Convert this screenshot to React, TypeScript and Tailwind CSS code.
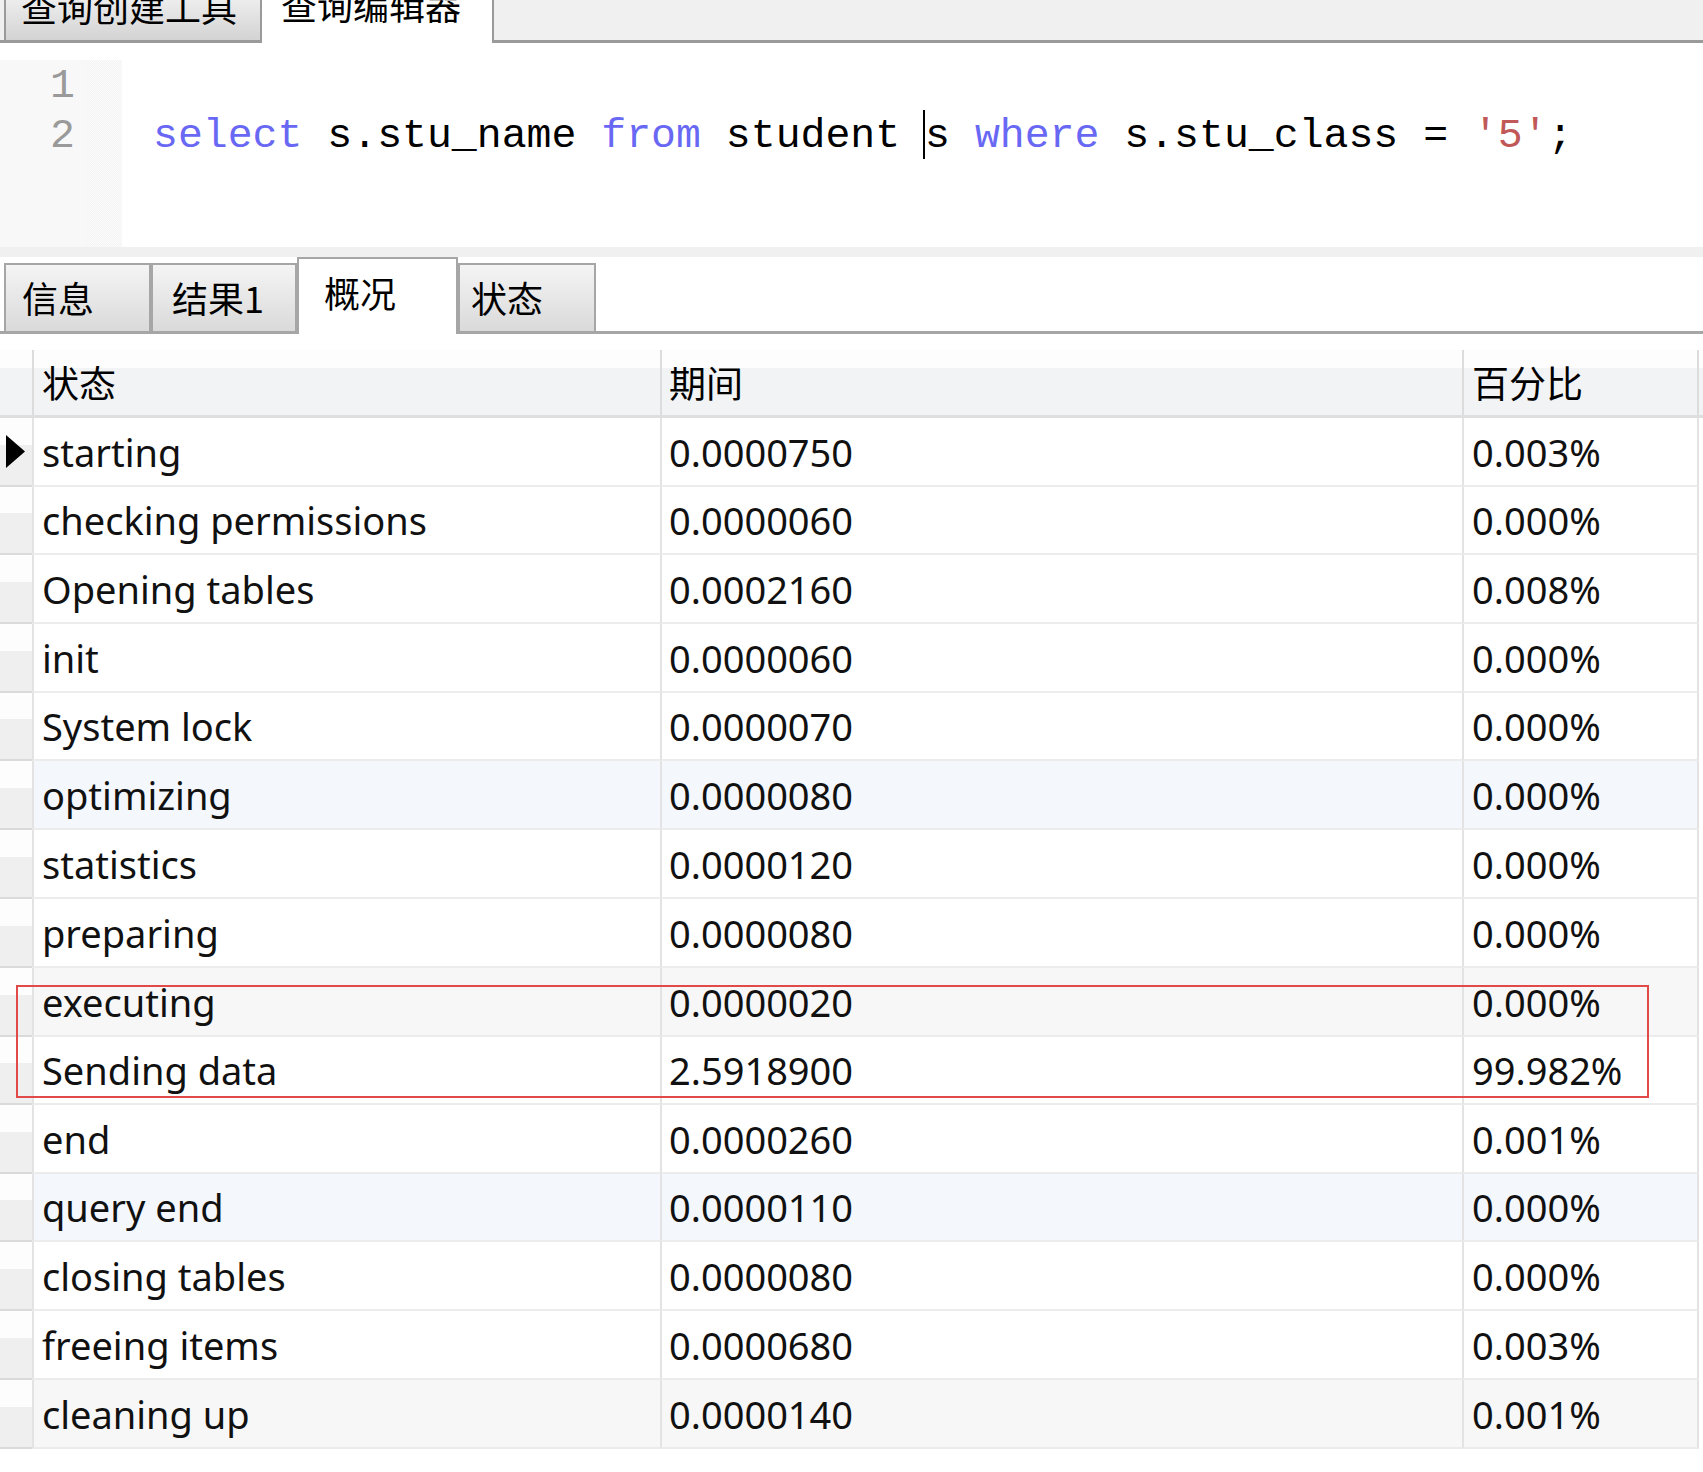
import React from "react";

type Row = { name: string; dur: string; pct: string; h: string; bg: string };

const rows: Row[] = [
  { name: "starting", dur: "0.0000750", pct: "0.003%", h: "h-[69px]", bg: "bg-white" },
  { name: "checking permissions", dur: "0.0000060", pct: "0.000%", h: "h-[68px]", bg: "bg-white" },
  { name: "Opening tables", dur: "0.0002160", pct: "0.008%", h: "h-[69px]", bg: "bg-white" },
  { name: "init", dur: "0.0000060", pct: "0.000%", h: "h-[69px]", bg: "bg-white" },
  { name: "System lock", dur: "0.0000070", pct: "0.000%", h: "h-[68px]", bg: "bg-white" },
  { name: "optimizing", dur: "0.0000080", pct: "0.000%", h: "h-[69px]", bg: "bg-[#f4f7fc]" },
  { name: "statistics", dur: "0.0000120", pct: "0.000%", h: "h-[69px]", bg: "bg-white" },
  { name: "preparing", dur: "0.0000080", pct: "0.000%", h: "h-[69px]", bg: "bg-white" },
  { name: "executing", dur: "0.0000020", pct: "0.000%", h: "h-[69px]", bg: "bg-[#f7f7f7]" },
  { name: "Sending data", dur: "2.5918900", pct: "99.982%", h: "h-[68px]", bg: "bg-white" },
  { name: "end", dur: "0.0000260", pct: "0.001%", h: "h-[69px]", bg: "bg-white" },
  { name: "query end", dur: "0.0000110", pct: "0.000%", h: "h-[68px]", bg: "bg-[#f4f7fc]" },
  { name: "closing tables", dur: "0.0000080", pct: "0.000%", h: "h-[69px]", bg: "bg-white" },
  { name: "freeing items", dur: "0.0000680", pct: "0.003%", h: "h-[69px]", bg: "bg-white" },
  { name: "cleaning up", dur: "0.0000140", pct: "0.001%", h: "h-[69px]", bg: "bg-[#f7f7f7]" },
];

const cjk = "font-['Noto_Sans_CJK_SC',sans-serif]";
const mono = "font-['Liberation_Mono',monospace]";
const sans = "font-['Noto_Sans','Noto_Sans_CJK_SC',sans-serif]";

export default function App() {
  return (
    <div className="w-[1703px] h-[1472px] bg-white overflow-hidden text-black">
      {/* top tab strip */}
      <div className={`flex h-[43px] bg-[#f0f0f0] overflow-hidden ${cjk} text-[36px] leading-[36px]`}>
        <div className="w-[4px] border-b-[3px] border-[#9a9a9a]" />
        <div className="w-[258px] flex items-end pl-[15px] pb-[16px] border-l-2 border-r-2 border-b-[3px] border-[#9a9a9a] bg-[linear-gradient(to_bottom,#ededed,#d3d3d3)] whitespace-nowrap">
          查询创建工具
        </div>
        <div className="w-[232px] flex items-end pl-[19px] pb-[21px] border-r-2 border-[#9a9a9a] bg-white whitespace-nowrap">
          查询编辑器
        </div>
        <div className="flex-1 border-b-[3px] border-[#9a9a9a]" />
      </div>

      {/* editor */}
      <div className="h-[17px] bg-white" />
      <div className={`flex h-[187px] ${mono} text-[41.5px] leading-[50px]`}>
        <div className="w-[84px] bg-[#f8f8f8] pt-[1px] pr-[9px] text-right text-[#9a9a9a]">
          <div>1</div>
          <div>2</div>
        </div>
        <div className="w-[38px] bg-[repeating-conic-gradient(#f3f3f3_0_25%,#fcfcfc_0_50%)] bg-[length:2px_2px]" />
        <div className="flex-1 pl-[31px] pt-[1px] whitespace-pre">
          <div>&nbsp;</div>
          <div>
            <span className="text-[#6868f4]">select</span>
            <span> s.stu_name </span>
            <span className="text-[#6868f4]">from</span>
            <span> student </span>
            <span className="relative inline-block w-0">
              <span className="absolute left-[-2px] top-[-37px] h-[49px] w-[2px] bg-black" />
            </span>
            <span>s </span>
            <span className="text-[#6868f4]">where</span>
            <span> s.stu_class = </span>
            <span className="text-[#c05858]">'5'</span>
            <span>;</span>
          </div>
        </div>
      </div>
      <div className="h-[10px] bg-[#f0f0f0]" />

      {/* result tabs */}
      <div className={`flex h-[77px] items-end ${cjk} text-[36px] leading-[36px]`}>
        <div className="w-[4px] self-stretch border-b-[3px] border-[#a6a6a6]" />
        <div className="w-[147px] h-[71px] flex items-center pl-[16px] pb-[3px] border-2 border-b-[3px] border-[#a6a6a6] bg-[linear-gradient(to_bottom,#f4f4f4,#dadada)]">
          信息
        </div>
        <div className="w-[146px] h-[71px] flex items-center pl-[19px] pb-[3px] border-2 border-b-[3px] border-[#a6a6a6] bg-[linear-gradient(to_bottom,#f4f4f4,#dadada)]">
          结果1
        </div>
        <div className="w-[161px] h-[77px] flex items-center pl-[25px] pb-[10px] border-2 border-b-0 border-[#a6a6a6] bg-white">
          概况
        </div>
        <div className="w-[138px] h-[71px] flex items-center pl-[11px] pb-[3px] border-2 border-b-[3px] border-[#a6a6a6] bg-[linear-gradient(to_bottom,#f4f4f4,#dadada)]">
          状态
        </div>
        <div className="flex-1 self-stretch border-b-[3px] border-[#a6a6a6]" />
      </div>

      {/* table */}
      <div className="h-[16px]" />
      <div className="relative">
        {/* header */}
        <div className={`grid grid-cols-[32px_628px_802px_237px] h-[68px] border-b-[3px] border-[#dedede] bg-[linear-gradient(to_bottom,#fdfdfd_28%,#f2f3f5_28%)] ${cjk} text-[37px]`}>
          <div />
          <div className="flex items-center pl-[8px] border-l-2 border-[#dcdcdc]">状态</div>
          <div className="flex items-center pl-[7px] border-l-2 border-[#dcdcdc]">期间</div>
          <div className="flex items-center pl-[8px] border-l-2 border-r-2 border-[#dcdcdc]">百分比</div>
        </div>
        {rows.map((r, i) => (
          <div
            key={r.name}
            className={`grid grid-cols-[32px_628px_802px_237px] ${r.h} ${sans} text-[38px] leading-[52px] text-[#111]`}
          >
            <div className="relative border-b-2 border-[#dadada] bg-[linear-gradient(to_bottom,#fdfdfd_40%,#efefef_40%)]">
              {i === 0 && (
                <svg className="absolute left-[6px] top-[17px]" width="20" height="33" viewBox="0 0 20 33">
                  <polygon points="0,0 19,16.5 0,33" fill="#000" />
                </svg>
              )}
            </div>
            <div className={`flex items-center pl-[8px] border-l-2 border-b-2 border-l-[#e3e3e3] border-b-[#ececec] ${r.bg} whitespace-nowrap`}>
              {r.name}
            </div>
            <div className={`flex items-center pl-[7px] border-l-2 border-b-2 border-l-[#e3e3e3] border-b-[#ececec] ${r.bg}`}>
              {r.dur}
            </div>
            <div className={`flex items-center pl-[8px] border-l-2 border-r-2 border-b-2 border-l-[#e3e3e3] border-r-[#e3e3e3] border-b-[#ececec] ${r.bg}`}>
              {r.pct}
            </div>
          </div>
        ))}
        {/* highlight box */}
        <div className="absolute left-[16px] top-[635px] w-[1633px] h-[113px] border-2 border-[#e24a4a] pointer-events-none" />
      </div>
    </div>
  );
}
